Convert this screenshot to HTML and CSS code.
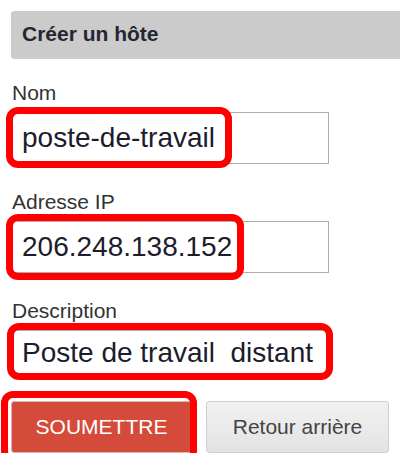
FILE: index.html
```html
<!DOCTYPE html>
<html lang="fr">

<head>
    <meta charset="UTF-8">
    <meta name="viewport" content="width=device-width, initial-scale=1.0">
    <title>Créer un hôte</title>
    <link rel="stylesheet" href="styles.css">
</head>

<body>
    <div class="panel">
        <h2 class="panel-title">Créer un hôte</h2>
        <form class="host-form">
            <div class="field">
                <label for="host-name">Nom</label>
                <div class="control">
                    <input type="text" id="host-name" name="name" value="poste-de-travail">
                    <span class="mark mark-name"></span>
                </div>
            </div>
            <div class="field">
                <label for="host-ip">Adresse IP</label>
                <div class="control">
                    <input type="text" id="host-ip" name="ip" value="206.248.138.152">
                    <span class="mark mark-ip"></span>
                </div>
            </div>
            <div class="field">
                <label for="host-desc">Description</label>
                <div class="control">
                    <input type="text" id="host-desc" name="description" class="short-input"
                        value="Poste de travail  distant">
                    <span class="mark mark-desc"></span>
                </div>
            </div>
            <div class="actions">
                <div class="control">
                    <button type="submit" class="btn btn-primary">SOUMETTRE</button>
                    <span class="mark mark-submit"></span>
                </div>
                <button type="button" class="btn btn-default">Retour arrière</button>
            </div>
        </form>
    </div>
</body>

</html>
```

FILE: styles.css
```css
body {
    margin: 0;
    font-family: "Liberation Sans", Arial, sans-serif;
    color: #333;
    background: #fff;
    overflow: hidden;
}

.panel {
    padding: 11px 0 0 11px;
}

.panel-title {
    margin: 0 -10px 0 0;
    height: 48px;
    line-height: 46px;
    padding-left: 11px;
    background-color: #cbcbcb;
    border-radius: 3px;
    font-size: 21px;
    font-weight: bold;
    color: #262633;
}

.field {
    margin-top: 26px;
    margin-left: 1px;
}

.field:first-child {
    margin-top: 22px;
}

.field label {
    display: block;
    font-size: 21px;
    line-height: 24px;
    color: #333;
}

.control {
    position: relative;
    margin-top: 7px;
    width: 317px;
}

.field input {
    display: block;
    width: 317px;
    height: 52px;
    box-sizing: border-box;
    margin: 0;
    padding: 0 9px;
    border: 1px solid #adadad;
    border-radius: 0;
    font-family: "Liberation Sans", Arial, sans-serif;
    font-size: 28px;
    color: #1c1c2c;
    background: #fff;
    outline: none;
}

.field .short-input {
    height: 46px;
}

/* red highlight frames drawn over the form */
.mark {
    position: absolute;
    box-sizing: border-box;
    border: 7px solid #ff0000;
    border-radius: 12px;
    pointer-events: none;
}

.mark-name {
    left: -6px;
    top: -5px;
    width: 226px;
    height: 61px;
}

.mark-ip {
    left: -6px;
    top: -7px;
    width: 238px;
    height: 66px;
}

.mark-desc {
    left: -5px;
    top: -7px;
    width: 326px;
    height: 57px;
}

.mark-submit {
    left: -10px;
    top: -10px;
    width: 196px;
    height: 72px;
}

.actions {
    display: flex;
    gap: 14px;
    margin-top: 25px;
}

.actions .control {
    width: auto;
    margin-top: 0;
}

.btn {
    display: block;
    height: 52px;
    padding: 0;
    border-radius: 3px;
    font-family: "Liberation Sans", Arial, sans-serif;
    font-size: 21px;
    cursor: pointer;
}

.btn-primary {
    width: 181px;
    background-color: #d54b3b;
    border: 1px solid #d9b5b0;
    color: #fff;
}

.btn-default {
    width: 183px;
    background: linear-gradient(#f1f1f1, #e3e3e3);
    border: 1px solid #cfcfcf;
    color: #444;
}
```
